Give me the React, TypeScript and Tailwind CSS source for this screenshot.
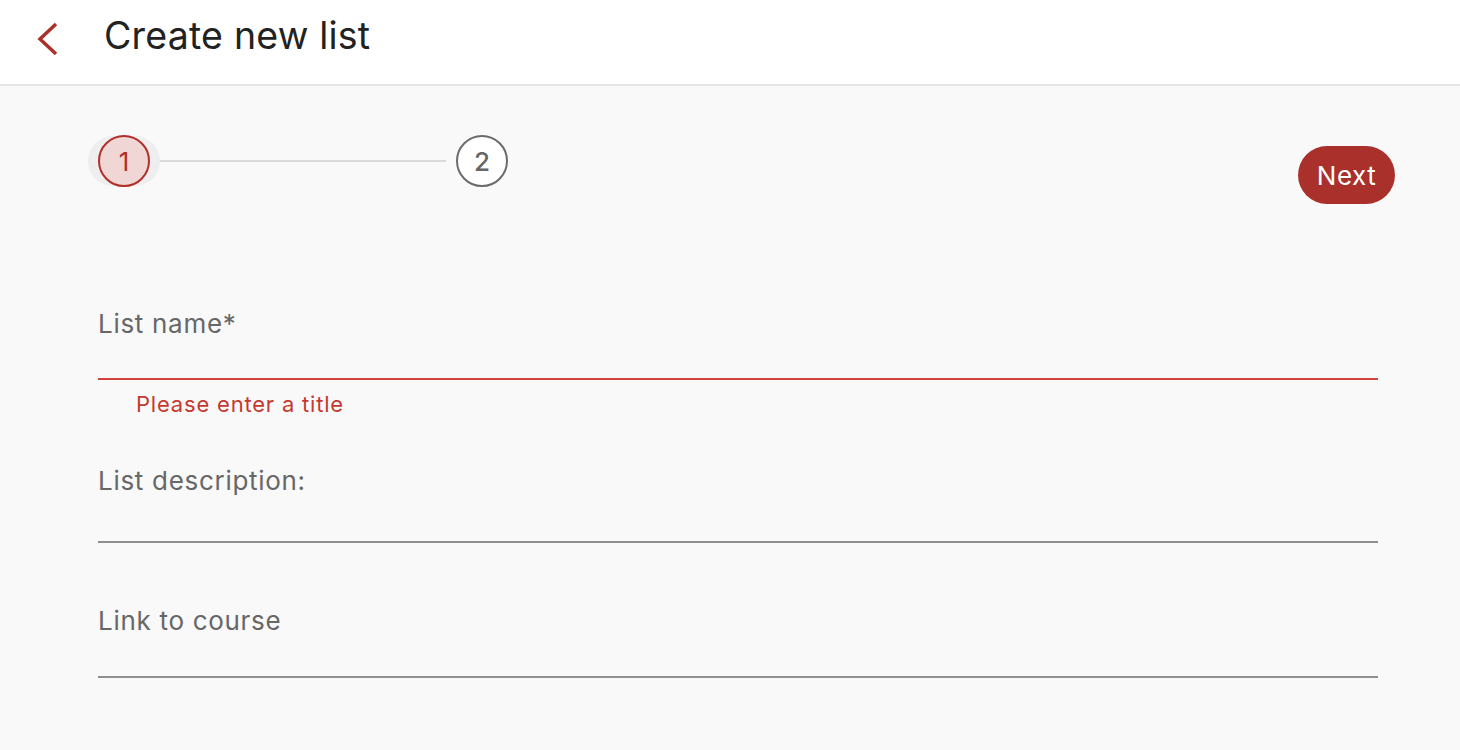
import { useState } from 'react';

const font = { fontFamily: 'Inter, "Noto Sans", sans-serif' };

const Field = ({ label, error, h }: { label: string; error?: string; h: string }) => {
  const [value, setValue] = useState('');
  return (
    <div className="flex flex-col">
      <label className="text-[26px] leading-[30px] tracking-[0.7px] text-[#676767]">{label}</label>
      <input
        value={value}
        onChange={(e) => setValue(e.target.value)}
        className={`${h} bg-transparent outline-none text-[22px] text-[#333] border-b-2 ${
          error ? 'border-[#d0443c]' : 'border-[#8f8f8f]'
        }`}
      />
      {error && (
        <p className="pl-[38px] pt-[11px] text-[22px] leading-[26px] tracking-[0.8px] text-[#c4392f]">{error}</p>
      )}
    </div>
  );
};

export default function App() {
  return (
    <div className="min-h-[750px] w-full bg-[#f9f9f9]" style={font}>
      {/* top bar */}
      <header className="h-[86px] bg-white border-b-2 border-[#e6e6e6] flex items-start">
        <button className="ml-[36px] mt-[22px] w-[22px] h-[34px] text-[#aa3129]">
          <svg width="22" height="34" viewBox="0 0 22 34" fill="none">
            <path d="M20 2 L4 17 L20 32" stroke="currentColor" strokeWidth="3.5" />
          </svg>
        </button>
        <h1 className="ml-[46px] mt-[17px] text-[37.5px] leading-[38px] text-[#222] tracking-[0.2px]">
          Create new list
        </h1>
      </header>

      <main className="pt-[49px] pl-[98px] pr-[82px]">
        {/* stepper + next */}
        <div className="flex items-start justify-between">
          <div className="flex items-center -ml-[10px]">
            <div className="w-[72px] h-[50px] rounded-full bg-[#eeeeee] flex items-center justify-center">
              <div className="w-[52px] h-[52px] rounded-full border-2 border-[#b0302a] bg-[#f1d6d6] flex items-center justify-center text-[26px] text-[#b0302a]">
                1
              </div>
            </div>
            <div className="w-[286px] h-[2px] bg-[#dadada]" />
            <div className="ml-[10px] w-[52px] h-[52px] rounded-full border-2 border-[#6b6b6b] bg-white flex items-center justify-center text-[26px] font-medium text-[#666]">
              2
            </div>
          </div>
          <button className="mt-[11px] h-[58px] w-[97px] rounded-full bg-[#a9302b] text-white text-[26px] tracking-[0.5px] -mr-[17px]">
            Next
          </button>
        </div>

        {/* form */}
        <div className="flex flex-col mt-[105px]">
          <Field label="List name*" error="Please enter a title" h="h-[41px]" />
          <div className="mt-[49px]">
            <Field label="List description:" h="h-[47px]" />
          </div>
          <div className="mt-[63px]">
            <Field label="Link to course" h="h-[42px]" />
          </div>
        </div>
      </main>
    </div>
  );
}
